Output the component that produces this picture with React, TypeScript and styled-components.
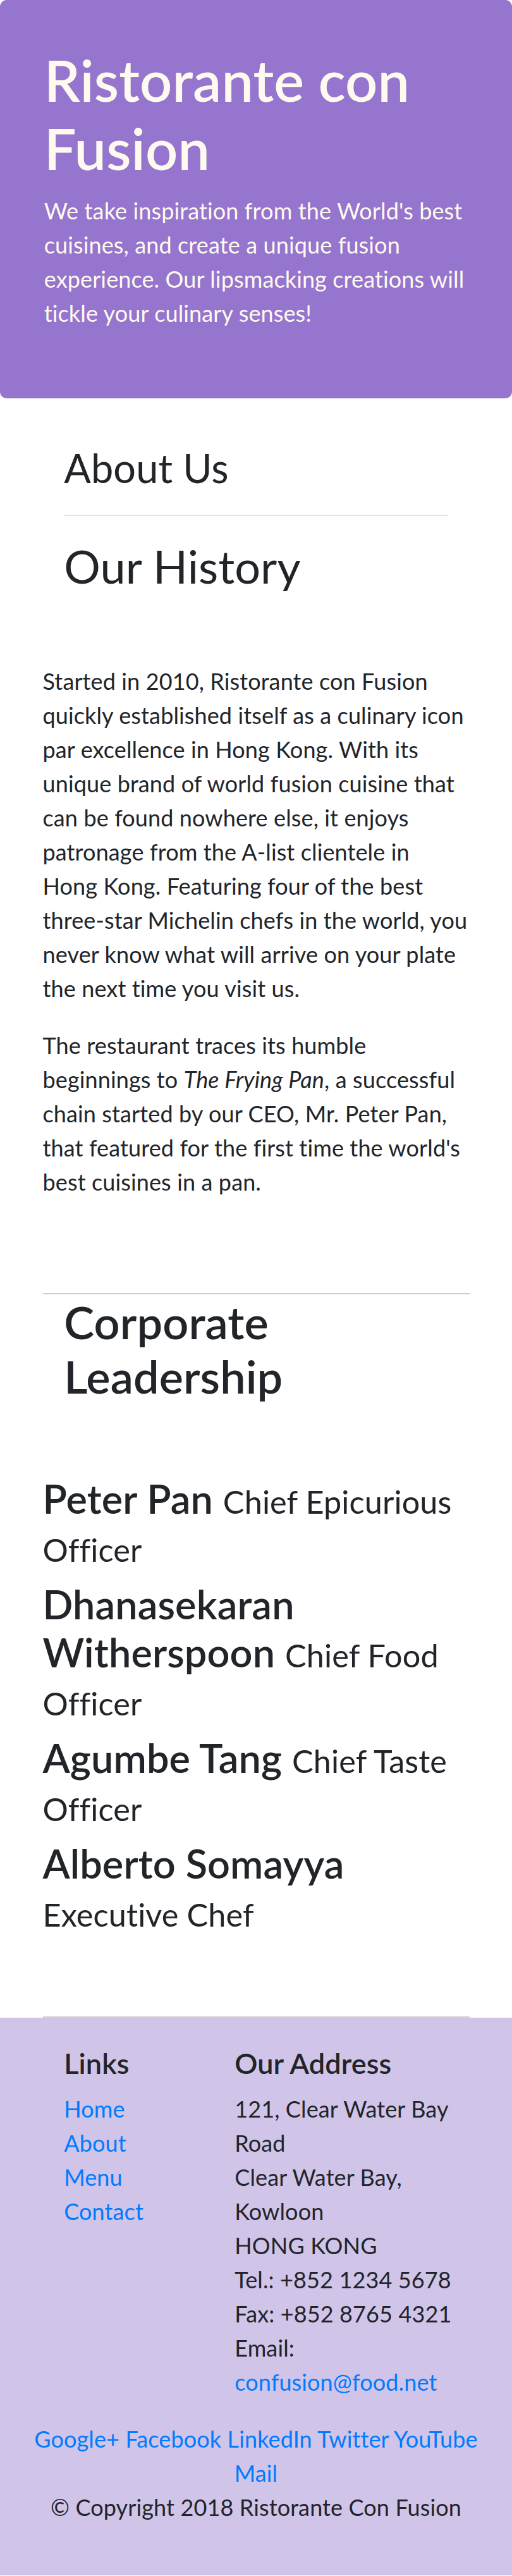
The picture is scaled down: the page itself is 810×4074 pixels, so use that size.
import React from 'react';
import styled, { createGlobalStyle } from 'styled-components';

const GlobalStyle = createGlobalStyle`
  *, *::before, *::after { box-sizing: border-box; }
  html, body { margin: 0; padding: 0; }
  body {
    font-family: Lato, "Segoe UI", "Open Sans", sans-serif;
    font-size: 36px;
    line-height: 1.5;
    letter-spacing: 0.125px;
    color: #212529;
    background: #ffffff;
  }
`;

const Jumbotron = styled.header`
  background: #9575cd;
  color: #fffaf0;
  border-radius: 10.8px;
  padding: 72px 69.75px;
  margin-bottom: 72px;
`;

const Brand = styled.h1`
  font-size: 90px;
  line-height: 1.2;
  font-weight: 600;
  margin: 0 0 18px;
`;

const Tagline = styled.p`
  margin: 0 0 36px;
`;

const Main = styled.main`
  padding: 0 67.5px;
`;

const HeadingBlock = styled.div`
  padding: 0 33.75px;
`;

const PageTitle = styled.h3`
  font-size: 63px;
  line-height: 1.2;
  font-weight: 400;
  margin: 0;
`;

const Rule = styled.hr`
  border: 0;
  border-top: 2px solid rgba(0, 0, 0, 0.1);
  margin: 36px 0;
`;

const SectionTitle = styled.h2<{ $strong?: boolean }>`
  font-size: 72px;
  line-height: 1.2;
  font-weight: ${p => (p.$strong ? 600 : 400)};
  margin: 0;
`;

const Section = styled.section`
  padding: 112.5px 0;
  border-bottom: 2px solid #cfcfcf;
`;

const Para = styled.p`
  margin: 0 0 36px;
`;

const LeaderList = styled.ul`
  list-style: none;
  margin: 0;
  padding: 0;
`;

const Leader = styled.li`
  font-size: 63px;
  line-height: 1.2;
  font-weight: 600;
  margin-bottom: 16px;
`;

const Role = styled.small`
  font-size: 80%;
  font-weight: 400;
`;

const Footer = styled.footer`
  background: #d1c4e9;
  padding: 45px 0;
`;

const FooterRow = styled.div`
  display: flex;
  flex-wrap: wrap;
`;

const FooterCol = styled.div<{ $span: number; $offset?: number }>`
  flex: 0 0 ${p => (p.$span / 12) * 100}%;
  max-width: ${p => (p.$span / 12) * 100}%;
  margin-left: ${p => ((p.$offset ?? 0) / 12) * 100}%;
  padding: 0 33.75px;
`;

const FooterHeading = styled.h5`
  font-size: 45px;
  line-height: 1.2;
  font-weight: 600;
  margin: 0 0 18px;
`;

const LinkList = styled.ul`
  list-style: none;
  margin: 0 0 36px;
  padding: 0;
`;

const FooterLink = styled.a`
  color: #007bff;
  text-decoration: none;
`;

const Address = styled.address`
  font-style: normal;
  margin: 0 0 36px;
`;

const Social = styled.div`
  text-align: center;
`;

const Copyright = styled.p`
  margin: 0 0 36px;
  text-align: center;
`;

const leaders = [
  { name: 'Peter Pan', role: 'Chief Epicurious Officer' },
  { name: 'Dhanasekaran Witherspoon', role: 'Chief Food Officer' },
  { name: 'Agumbe Tang', role: 'Chief Taste Officer' },
  { name: 'Alberto Somayya', role: 'Executive Chef' },
];

const navLinks = ['Home', 'About', 'Menu', 'Contact'];
const socials = ['Google+', 'Facebook', 'LinkedIn', 'Twitter', 'YouTube', 'Mail'];

export default function App() {
  return (
    <>
      <GlobalStyle />
      <Jumbotron>
        <Brand>Ristorante con Fusion</Brand>
        <Tagline>
          We take inspiration from the World's best cuisines, and create a unique fusion experience. Our
          lipsmacking creations will tickle your culinary senses!
        </Tagline>
      </Jumbotron>

      <Main>
        <HeadingBlock>
          <PageTitle>About Us</PageTitle>
          <Rule />
          <SectionTitle>Our History</SectionTitle>
        </HeadingBlock>
        <Section>
          <Para>
            Started in 2010, Ristorante con Fusion quickly established itself as a culinary icon par excellence
            in Hong Kong. With its unique brand of world fusion cuisine that can be found nowhere else, it enjoys
            patronage from the A-list clientele in Hong Kong. Featuring four of the best three-star Michelin
            chefs in the world, you never know what will arrive on your plate the next time you visit us.
          </Para>
          <Para>
            The restaurant traces its humble beginnings to <em>The Frying Pan</em>, a successful chain started
            by our CEO, Mr. Peter Pan, that featured for the first time the world's best cuisines in a pan.
          </Para>
        </Section>

        <HeadingBlock>
          <SectionTitle $strong>Corporate Leadership</SectionTitle>
        </HeadingBlock>
        <Section>
          <LeaderList>
            {leaders.map(l => (
              <Leader key={l.name}>
                {l.name} <Role>{l.role}</Role>
              </Leader>
            ))}
          </LeaderList>
        </Section>
      </Main>

      <Footer>
        <FooterRow>
          <FooterCol $span={4} $offset={1}>
            <FooterHeading>Links</FooterHeading>
            <LinkList>
              {navLinks.map(n => (
                <li key={n}>
                  <FooterLink href="#">{n}</FooterLink>
                </li>
              ))}
            </LinkList>
          </FooterCol>
          <FooterCol $span={7}>
            <FooterHeading>Our Address</FooterHeading>
            <Address>
              121, Clear Water Bay Road
              <br />
              Clear Water Bay, Kowloon
              <br />
              HONG KONG
              <br />
              Tel.: +852 1234 5678
              <br />
              Fax: +852 8765 4321
              <br />
              Email: <FooterLink href="mailto:confusion@food.net">confusion@food.net</FooterLink>
            </Address>
          </FooterCol>
          <FooterCol $span={12}>
            <Social>
              {socials.map((s, i) => (
                <React.Fragment key={s}>
                  {i > 0 && ' '}
                  <FooterLink href="#">{s}</FooterLink>
                </React.Fragment>
              ))}
            </Social>
          </FooterCol>
        </FooterRow>
        <Copyright>© Copyright 2018 Ristorante Con Fusion</Copyright>
      </Footer>
    </>
  );
}
